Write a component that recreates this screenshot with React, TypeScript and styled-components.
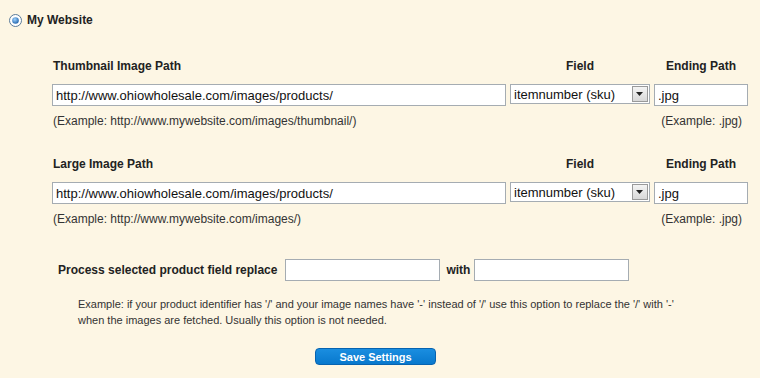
import * as React from 'react';
import styled, { createGlobalStyle } from 'styled-components';

const GlobalStyle = createGlobalStyle`
  html, body {
    margin: 0;
    padding: 0;
    background: #fdf6e4;
  }
  body {
    font-family: 'Liberation Sans', Arial, sans-serif;
    color: #222;
  }
`;

const Page = styled.div`
  width: 760px;
  height: 378px;
  background: #fdf6e4;
  overflow: hidden;
  box-sizing: border-box;
  padding: 13px 0 0 9px;
`;

const RadioRow = styled.label`
  display: flex;
  align-items: center;
  gap: 5px;
  font-size: 12px;
  font-weight: bold;
  color: #222;
  height: 14px;
`;

const Settings = styled.div`
  padding-left: 43px;
  margin-top: 32px;
  display: flex;
  flex-direction: column;
`;

const PathBlock = styled.div`
  display: grid;
  grid-template-columns: 454px 140px 94px;
  column-gap: 4px;
  row-gap: 0;
  margin-bottom: 29px;
`;

const HeadLabel = styled.div<{ $align?: string }>`
  font-size: 12px;
  font-weight: bold;
  color: #222;
  text-align: ${p => p.$align || 'left'};
  height: 14px;
  line-height: 14px;
  padding-left: ${p => (p.$align ? '0' : '1px')};
  margin-bottom: 11px;
`;

const TextInput = styled.input<{ $w?: number }>`
  box-sizing: border-box;
  width: ${p => (p.$w ? `${p.$w}px` : '100%')};
  height: 22px;
  border: 1px solid #a5acb2;
  background: #fff;
  font-family: 'Liberation Sans', Arial, sans-serif;
  font-size: 13px;
  color: #111;
  padding: 1px 3px 0;
  outline: none;
`;

const FakeSelect = styled.div`
  box-sizing: border-box;
  height: 20px;
  border: 1px solid #a5acb2;
  background: #fff;
  display: flex;
  align-items: center;
  justify-content: space-between;
  font-size: 13px;
  color: #111;
  padding: 0 1px 0 3px;
`;

const ArrowBox = styled.div`
  width: 16px;
  height: 16px;
  box-sizing: border-box;
  border: 1px solid #9a9a9a;
  background: linear-gradient(#f4f4f4, #d8d8d8);
  display: flex;
  align-items: center;
  justify-content: center;
`;

const Hint = styled.div<{ $align?: string }>`
  font-size: 12px;
  line-height: 14px;
  color: #333;
  margin-top: 8px;
  text-align: ${p => p.$align || 'left'};
  padding: ${p => (p.$align ? '0 6px 0 0' : '0 0 0 1px')};
`;

const ReplaceRow = styled.div`
  display: flex;
  align-items: center;
  padding-left: 6px;
  margin-top: 4px;
  font-size: 12px;
  font-weight: bold;
  color: #222;
`;

const RowText = styled.span<{ $gapL: number; $gapR: number }>`
  margin: 0 ${p => p.$gapR}px 0 ${p => p.$gapL}px;
`;

const Note = styled.p`
  margin: 15px 0 0 26px;
  font-size: 11px;
  line-height: 16px;
  color: #333;
`;

const ButtonWrap = styled.div`
  display: flex;
  justify-content: center;
  margin-top: 20px;
  width: 733px;
`;

const SaveButton = styled.button`
  width: 121px;
  height: 17px;
  border-radius: 4px;
  border: 1px solid #0763b0;
  background: linear-gradient(#1a8ee0, #0878cd);
  color: #fff;
  font-family: 'Liberation Sans', Arial, sans-serif;
  font-size: 11px;
  font-weight: bold;
  padding: 0;
  line-height: 14px;
  cursor: pointer;
`;

const Radio = () => (
  <svg width="13" height="13" viewBox="0 0 13 13">
    <defs>
      <radialGradient id="rg" cx="40%" cy="35%" r="70%">
        <stop offset="0%" stopColor="#9fd3ff" />
        <stop offset="100%" stopColor="#1c5fa8" />
      </radialGradient>
    </defs>
    <circle cx="6.5" cy="6.5" r="6" fill="#fff" stroke="#5b7a98" strokeWidth="1" />
    <circle cx="6.5" cy="6.5" r="3.3" fill="url(#rg)" />
  </svg>
);

const Arrow = () => (
  <svg width="8" height="5" viewBox="0 0 8 5">
    <path d="M0 0 H7 L3.5 4 Z" fill="#222" />
  </svg>
);

type BlockProps = { title: string; example: string };

const PathSection = ({ title, example }: BlockProps) => (
  <PathBlock>
    <HeadLabel>{title}</HeadLabel>
    <HeadLabel $align="center">Field</HeadLabel>
    <HeadLabel $align="center">Ending Path</HeadLabel>
    <TextInput defaultValue="http://www.ohiowholesale.com/images/products/" />
    <FakeSelect>
      <span>itemnumber (sku)</span>
      <ArrowBox>
        <Arrow />
      </ArrowBox>
    </FakeSelect>
    <TextInput defaultValue=".jpg" />
    <Hint>{example}</Hint>
    <div />
    <Hint $align="right">(Example: .jpg)</Hint>
  </PathBlock>
);

export default function App() {
  return (
    <Page>
      <GlobalStyle />
      <RadioRow>
        <Radio />
        My Website
      </RadioRow>
      <Settings>
        <PathSection
          title="Thumbnail Image Path"
          example="(Example: http://www.mywebsite.com/images/thumbnail/)"
        />
        <PathSection
          title="Large Image Path"
          example="(Example: http://www.mywebsite.com/images/)"
        />
        <ReplaceRow>
          <RowText $gapL={0} $gapR={8}>Process selected product field replace</RowText>
          <TextInput $w={155} />
          <RowText $gapL={6} $gapR={4}>with</RowText>
          <TextInput $w={155} />
        </ReplaceRow>
        <Note>
          Example: if your product identifier has '/' and your image names have '-' instead of '/' use this option to replace the '/' with '-'
          <br />
          when the images are fetched. Usually this option is not needed.
        </Note>
      </Settings>
      <ButtonWrap>
        <SaveButton>Save Settings</SaveButton>
      </ButtonWrap>
    </Page>
  );
}
